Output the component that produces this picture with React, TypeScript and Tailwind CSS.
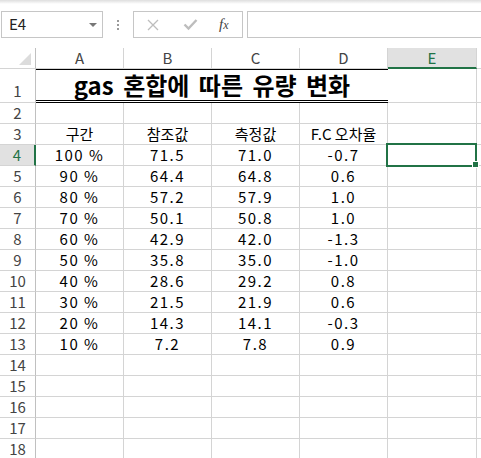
import clsx from 'clsx';

const rows = [
  ['100 %', '71.5', '71.0', '-0.7'],
  ['90 %', '64.4', '64.8', '0.6'],
  ['80 %', '57.2', '57.9', '1.0'],
  ['70 %', '50.1', '50.8', '1.0'],
  ['60 %', '42.9', '42.0', '-1.3'],
  ['50 %', '35.8', '35.0', '-1.0'],
  ['40 %', '28.6', '29.2', '0.8'],
  ['30 %', '21.5', '21.9', '0.6'],
  ['20 %', '14.3', '14.1', '-0.3'],
  ['10 %', '7.2', '7.8', '0.9'],
];

const cols = ['A', 'B', 'C', 'D'];

function RowHead({ n, active = false, tall = false }: { n: number; active?: boolean; tall?: boolean }) {
  return (
    <div
      className={clsx(
        'w-[36px] shrink-0 flex justify-center border-b border-b-[#d4d4d4] leading-[20px]',
        active ? 'bg-[#e1e1e1] text-[#217346] border-r-2 border-r-[#217346]' : 'border-r border-r-[#c0c0c0] text-[#444]',
        tall ? 'h-[34px] items-end pb-[1px]' : 'h-[21px] items-center'
      )}
    >
      {n}
    </div>
  );
}

function Cell({ children, wide = false, num = false }: { children?: React.ReactNode; wide?: boolean; num?: boolean }) {
  return (
    <div
      className={clsx(
        'h-[21px] shrink-0 border-b border-r border-[#d4d4d4] text-center leading-[20px] whitespace-nowrap',
        wide ? 'w-[89px]' : 'w-[88px]',
        num && 'tracking-[1.5px]'
      )}
    >
      {children}
    </div>
  );
}

function Filler() {
  return <div className="h-[21px] flex-1 border-b border-[#d4d4d4]" />;
}

function Toolbar() {
  return (
    <div className="h-[48px] bg-white">
      <div className="h-[4px] bg-linear-to-b from-[#dedede] to-white" />
      <div className="mt-[7px] flex items-center">
        <div className="ml-[1px] flex h-[27px] w-[102px] items-center justify-between border border-[#c6c6c6] bg-white pl-[7px] pr-[5px] text-[15px] text-[#222]">
          <span>E4</span>
          <span className="mt-[1px] h-0 w-0 border-x-[4px] border-t-[4px] border-x-transparent border-t-[#777]" />
        </div>
        <div className="ml-[14px] flex w-[3px] flex-col gap-[2px]">
          <span className="h-[2px] w-[2px] bg-[#9a9a9a]" />
          <span className="h-[2px] w-[2px] bg-[#9a9a9a]" />
          <span className="h-[2px] w-[2px] bg-[#9a9a9a]" />
        </div>
        <div className="ml-[13px] flex h-[27px] w-[110px] items-center border border-[#c6c6c6] bg-white">
          <svg width="14" height="14" viewBox="0 0 14 14" className="ml-[12px]">
            <path d="M2 2 L12 12 M12 2 L2 12" stroke="#bdbdbd" strokeWidth="1.3" fill="none" />
          </svg>
          <svg width="15" height="13" viewBox="0 0 15 13" className="ml-[23px]">
            <path d="M1.5 6.5 L5.5 10.5 L13.5 2" stroke="#bdbdbd" strokeWidth="2.4" fill="none" />
          </svg>
          <span className="ml-[21px] font-['Liberation_Serif',serif] text-[15px] italic text-[#444]">
            f<span className="text-[12px]">x</span>
          </span>
        </div>
        <div className="ml-[4px] h-[27px] flex-1 border border-r-0 border-[#c6c6c6] bg-white" />
      </div>
    </div>
  );
}

export default function App() {
  return (
    <div className="h-[458px] w-[481px] overflow-hidden bg-white font-['Noto_Sans_CJK_KR',sans-serif] text-[15px] text-black">
      <Toolbar />

      {/* column headers */}
      <div className="flex text-[#444]">
        <div className="relative h-[21px] w-[36px] shrink-0 border-b border-r border-b-[#d4d4d4] border-r-[#c0c0c0]">
          <div className="absolute bottom-[3px] right-[4px] h-0 w-0 border-b-[12px] border-l-[12px] border-b-[#dcdcdc] border-l-transparent" />
        </div>
        {cols.map((c) => (
          <div key={c} className="h-[21px] w-[88px] shrink-0 border-b border-r border-[#d4d4d4] text-center leading-[20px]">
            {c}
          </div>
        ))}
        <div className="h-[21px] w-[89px] shrink-0 border-b-2 border-r border-b-[#217346] border-r-[#d4d4d4] bg-[#e1e1e1] text-center leading-[20px] text-[#217346]">
          E
        </div>
        <div className="h-[21px] flex-1 border-b border-[#d4d4d4]" />
      </div>

      {/* row 1: merged title */}
      <div className="flex">
        <RowHead n={1} tall />
        <div className="h-[34px] w-[352px] shrink-0 border-t border-b-[3px] border-double border-black text-center text-[24px] font-bold leading-[30px] [word-spacing:4px]">
          gas 혼합에 따른 유량 변화
        </div>
        <div className="h-[34px] w-[89px] shrink-0 border-b border-r border-[#d4d4d4]" />
        <div className="h-[34px] flex-1 border-b border-[#d4d4d4]" />
      </div>

      <div className="flex">
        <RowHead n={2} />
        <Cell />
        <Cell />
        <Cell />
        <Cell />
        <Cell wide />
        <Filler />
      </div>

      <div className="flex">
        <RowHead n={3} />
        <Cell>구간</Cell>
        <Cell>참조값</Cell>
        <Cell>측정값</Cell>
        <Cell>F.C 오차율</Cell>
        <Cell wide />
        <Filler />
      </div>

      {rows.map((r, i) => (
        <div key={i} className="flex">
          <RowHead n={i + 4} active={i === 0} />
          {r.map((v, j) => (
            <Cell key={j} num>
              {v}
            </Cell>
          ))}
          {i === 0 ? (
            <div className="relative h-[21px] w-[89px] shrink-0 border-b border-r border-[#d4d4d4]">
              {/* active cell outline + fill handle */}
              <div className="absolute -left-[2px] -top-[2px] h-[24px] w-[91px] border-2 border-[#217346]" />
              <div className="absolute -bottom-[3px] -right-[3px] h-[7px] w-[7px] border border-white bg-[#217346]" />
            </div>
          ) : (
            <Cell wide />
          )}
          <Filler />
        </div>
      ))}

      {[14, 15, 16, 17, 18].map((n) => (
        <div key={n} className="flex">
          <RowHead n={n} />
          <Cell />
          <Cell />
          <Cell />
          <Cell />
          <Cell wide />
          <Filler />
        </div>
      ))}
    </div>
  );
}
